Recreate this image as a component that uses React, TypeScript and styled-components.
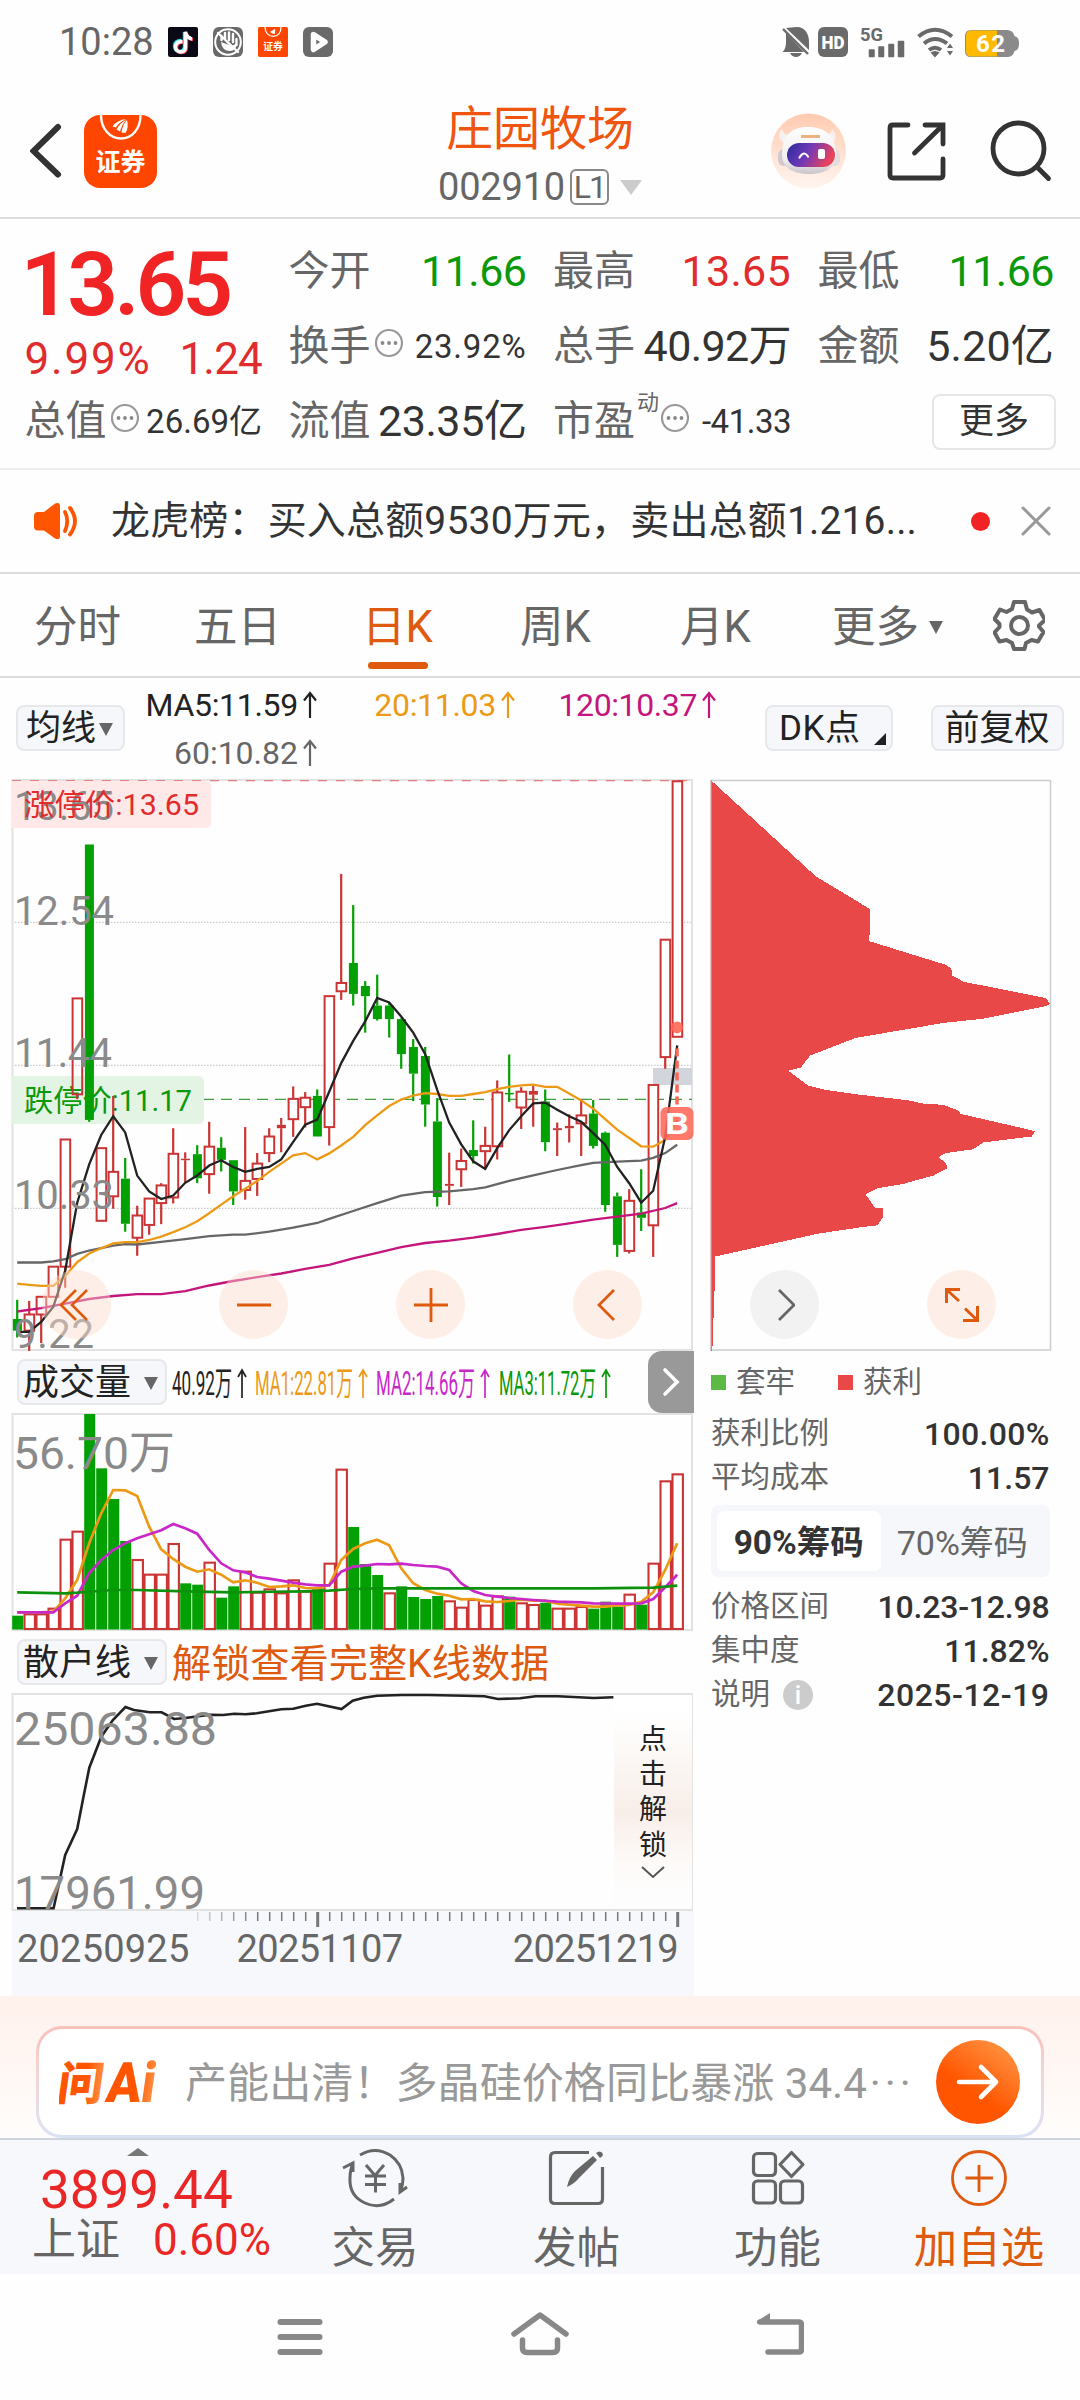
import React from 'react';
import styled, { createGlobalStyle } from 'styled-components';

const GlobalStyle = createGlobalStyle`
  * { box-sizing: border-box; }
  body {
    margin: 0;
    background: #fefefe;
    font-family: Roboto, "Noto Sans CJK SC", sans-serif;
    color: #333;
    line-height: 1;
  }
  svg { display: block; flex: none; }
  svg text { font-family: Roboto, "Noto Sans CJK SC", sans-serif; }
`;

const RED = '#e02c2c';
const UP = '#c93434';
const GREEN = '#0a990a';
const DOWN = '#03a003';
const ORANGE = '#dd5a0f';

const Screen = styled.div`
  width: 1080px;
  height: 2400px;
  display: flex;
  flex-direction: column;
  overflow: hidden;
  background: #fefefe;
  white-space: nowrap;
`;

/* ---------- status bar ---------- */

const StatusBar = styled.div`
  height: 85px;
  padding: 0 60px 0 59px;
  display: flex;
  justify-content: space-between;
`;
const StatusGroup = styled.div<{ $gap: number }>`
  display: flex;
  align-items: center;
  height: 84px;
  gap: ${(p) => p.$gap}px;
`;
const Clock = styled.span`
  font-size: 38px;
  color: #666;
  width: 94px;
`;

/* ---------- header ---------- */

const Header = styled.header`
  height: 134px;
  border-bottom: 2px solid #dcdcdc;
  display: grid;
  grid-template-columns: 300px 1fr 302px;
  padding: 0 28px 0 30px;
`;
const HeaderLeft = styled.div`
  display: flex;
  gap: 22px;
  padding-top: 30px;
`;
const HeaderRight = styled.div`
  display: flex;
  justify-content: flex-end;
  padding-top: 28px;
`;
const TitleBlock = styled.div`
  display: flex;
  flex-direction: column;
  align-items: center;
`;
const Title = styled.h1`
  margin: 19px 0 0;
  font-size: 47px;
  font-weight: 400;
  color: #f05510;
  height: 50px;
  line-height: 50px;
`;
const CodeLine = styled.div`
  display: flex;
  align-items: center;
  height: 36px;
  margin-top: 15px;
  font-size: 38px;
  letter-spacing: -0.2px;
  color: #666;
`;
const LevelTag = styled.span`
  width: 39px;
  height: 36px;
  margin-left: 5px;
  border: 2px solid #888;
  border-radius: 6px;
  font-size: 32px;
  line-height: 33px;
  text-align: center;
  letter-spacing: -2px;
`;
const Triangle = styled.i<{ $w: number; $h: number; $color: string; $ml?: number; $up?: boolean }>`
  width: 0;
  height: 0;
  flex: none;
  margin-left: ${(p) => p.$ml ?? 0}px;
  border-left: ${(p) => p.$w / 2}px solid transparent;
  border-right: ${(p) => p.$w / 2}px solid transparent;
  ${(p) => (p.$up ? 'border-bottom' : 'border-top')}: ${(p) => p.$h}px solid ${(p) => p.$color};
`;

/* ---------- quote ---------- */

const Quote = styled.section`
  height: 251px;
  padding: 15px 26px 0 24.5px;
  border-bottom: 2px solid #eeeeee;
  display: grid;
  grid-template-columns: 237.5px 238px 238px 236.5px;
  grid-template-rows: 75px 75px 75px;
  column-gap: 26.5px;
`;
const Price = styled.div`
  grid-row: span 2;
  display: flex;
  flex-direction: column;
`;
const PriceNow = styled.div`
  height: 101px;
  line-height: 102px;
  font-size: 89px;
  font-weight: 600;
  letter-spacing: -4px;
  color: #f02424;
  margin-left: -4px;
`;
const PriceChange = styled.div`
  height: 49px;
  line-height: 49px;
  display: flex;
  justify-content: space-between;
  font-size: 44px;
  color: ${RED};
`;
const Percent = styled.span<{ $track: number }>`
  letter-spacing: ${(p) => p.$track}px;
`;
const Cell = styled.div`
  display: flex;
  align-items: center;
  min-width: 0;
`;
const Label = styled.span`
  font-size: 41px;
  color: #666;
`;
const Value = styled.span<{ $small?: boolean; $color?: string; $track?: number }>`
  margin-left: auto;
  font-size: ${(p) => (p.$small ? 33 : 43)}px;
  color: ${(p) => p.$color ?? '#333'};
  letter-spacing: ${(p) => p.$track ?? 0}px;
`;
const Sup = styled.sup`
  font-size: 22px;
  color: #666;
  align-self: flex-start;
  margin: 8px 0 0 2px;
  line-height: 1;
`;
const MoreButton = styled.button`
  width: 124px;
  height: 56px;
  margin-left: auto;
  margin-right: -2px;
  padding: 0;
  border: 2px solid #e6e6e6;
  border-radius: 8px;
  background: #fff;
  font: inherit;
  font-size: 35px;
  color: #333;
`;

/* ---------- news ---------- */

const News = styled.section`
  height: 104px;
  padding: 0 29px 0 32px;
  border-bottom: 2px solid #dcdcdc;
  display: flex;
  align-items: center;
`;
const NewsText = styled.p`
  margin: 0 0 0 29px;
  width: 814px;
  font-size: 39px;
  letter-spacing: 0.17px;
`;
const RedDot = styled.i`
  width: 19px;
  height: 19px;
  border-radius: 50%;
  background: #f02424;
  margin: 0 31px 0 46px;
`;

/* ---------- tabs ---------- */

const Tabs = styled.nav`
  height: 104px;
  border-bottom: 2px solid #dcdcdc;
  padding-left: 34px;
  display: flex;
  align-items: stretch;
`;
const Tab = styled.span<{ $w: number; $active?: boolean }>`
  width: ${(p) => p.$w}px;
  display: flex;
  align-items: center;
  position: relative;
  font-size: 43.5px;
  color: ${(p) => (p.$active ? ORANGE : '#666')};
  padding-top: 5px;
  &::after {
    content: '';
    display: ${(p) => (p.$active ? 'block' : 'none')};
    position: absolute;
    left: 6px;
    bottom: 7px;
    width: 60px;
    height: 7px;
    border-radius: 4px;
    background: ${ORANGE};
  }
`;

/* ---------- indicator bar ---------- */

const IndicatorBar = styled.section`
  height: 101px;
  display: flex;
  padding: 0 16px;
  align-items: flex-start;
`;
const Chip = styled.button<{ $w: number }>`
  position: relative;
  flex: none;
  width: ${(p) => p.$w}px;
  height: 46px;
  padding: 2px 8px 0 8px;
  border: 2px solid #e6e8ec;
  border-radius: 8px;
  background: #f6f7fa;
  font: inherit;
  font-size: 35px;
  line-height: 40px;
  color: #222;
  text-align: left;
  display: flex;
  align-items: center;
`;
const ChipSlot = styled.div<{ $ml?: number }>`
  padding-top: 27px;
  margin-left: ${(p) => p.$ml ?? 0}px;
`;
const AverageGrid = styled.div`
  width: 596px;
  margin-left: 20px;
  padding-top: 3px;
  display: grid;
  grid-template-columns: 173px 198px 201px;
  grid-template-rows: 48px 48px;
  align-items: center;
  justify-items: end;
`;
const Average = styled.span<{ $color: string; $track?: number }>`
  display: flex;
  align-items: center;
  gap: 4px;
  font-size: 32px;
  color: ${(p) => p.$color};
  letter-spacing: ${(p) => p.$track ?? -0.3}px;
`;
const Corner = styled.i`
  position: absolute;
  right: 5px;
  bottom: 4px;
  border-left: 12px solid transparent;
  border-bottom: 12px solid #222;
`;

/* ---------- chart area ---------- */

const ChartArea = styled.main`
  height: 1217px;
  display: flex;
`;
const LeftColumn = styled.div`
  width: 694px;
  padding-left: 11px;
`;
const KPanel = styled.div`
  position: relative;
  height: 572px;
`;
const RoundButton = styled.button<{ $cx: number; $gray?: boolean; $nudge?: number }>`
  position: absolute;
  left: ${(p) => p.$cx - 34.5}px;
  bottom: 12px;
  width: 69px;
  height: 69px;
  border: 0;
  padding: 0 ${(p) => p.$nudge ?? 0}px 0 0;
  border-radius: 50%;
  background: ${(p) => (p.$gray ? '#f2f2f2' : 'rgba(253, 221, 204, 0.45)')};
  display: flex;
  align-items: center;
  justify-content: center;
`;
const SubHeader = styled.div`
  height: 62px;
  padding: 8px 0 0 6px;
  display: flex;
  align-items: flex-start;
`;
const SubChip = styled(Chip)`
  padding: 2px 7px 0 4px;
  font-size: 36px;
  justify-content: space-between;
`;
const Legend = styled.div`
  height: 46px;
  display: flex;
  align-items: center;
  margin-left: 5px;
`;
const Narrow = styled.span<{ $w: number; $color: string }>`
  display: flex;
  width: ${(p) => p.$w}px;
  color: ${(p) => p.$color};
`;
const LegendSvg = styled.svg`
  overflow: visible;
`;
const NextButton = styled.button`
  width: 46px;
  height: 62px;
  margin: -8px 0 0 auto;
  border: 0;
  padding: 0;
  border-radius: 14px 0 0 14px;
  background: #999;
  display: flex;
  align-items: center;
  justify-content: center;
`;
const UnlockTitle = styled.span`
  margin-left: 5px;
  font-size: 39.2px;
  line-height: 50px;
  color: ${ORANGE};
`;
const RetailPanel = styled.div`
  position: relative;
  height: 218px;
`;
const Unlock = styled.div`
  position: absolute;
  right: 2px;
  top: 2px;
  width: 78px;
  height: 214px;
  display: flex;
  flex-direction: column;
  align-items: center;
  padding-top: 27px;
  font-size: 28px;
  line-height: 35.2px;
  color: #222;
  background: linear-gradient(#fff 8%, #fdfbf9 20%, #f8eee9 55%, #fdfaf8 78%, #fdfdfd 92%);
`;
const Axis = styled.div`
  height: 85px;
  margin-left: 1px;
  background: #f7f8fb;
`;
const Dates = styled.div`
  display: flex;
  font-size: 38px;
  color: #666;
  padding: 1px 16px 0 5px;
`;
const DateText = styled.span<{ $ml: string; $track: number }>`
  margin-left: ${(p) => p.$ml};
  letter-spacing: ${(p) => p.$track}px;
`;

const RightColumn = styled.div`
  width: 342px;
  margin-left: 16px;
`;
const ChipLegend = styled.div`
  display: flex;
  align-items: center;
  height: 61px;
  padding: 2px 0 0 1px;
  font-size: 29.5px;
  color: #666;
`;
const Square = styled.i<{ $color: string; $ml?: number }>`
  width: 15px;
  height: 15px;
  margin: 0 10px 0 ${(p) => p.$ml ?? 0}px;
  background: ${(p) => p.$color};
`;
const StatRow = styled.div`
  height: 44px;
  display: flex;
  align-items: center;
  padding: 0 2.5px 0 1px;
  font-size: 29.5px;
  color: #666;
`;
const Strong = styled.b<{ $track?: number }>`
  margin-left: auto;
  font-size: 32px;
  font-weight: 500;
  letter-spacing: ${(p) => p.$track ?? 0}px;
  color: #333;
`;
const Segment = styled.div`
  width: 339px;
  height: 72px;
  margin: 5px 0 8px 1px;
  padding: 6px;
  border-radius: 7px;
  background: #f6f7fa;
  display: flex;
`;
const SegmentItem = styled.span<{ $active?: boolean }>`
  flex: 1;
  padding-top: 2px;
  border-radius: 7px;
  background: ${(p) => (p.$active ? '#fff' : 'transparent')};
  color: ${(p) => (p.$active ? '#333' : '#666')};
  font-weight: ${(p) => (p.$active ? 700 : 400)};
  font-size: ${(p) => (p.$active ? 33.5 : 34)}px;
  line-height: 60px;
  text-align: center;
`;
const Info = styled.i`
  width: 30px;
  height: 30px;
  margin-left: 13px;
  border-radius: 50%;
  background: #ccc;
  color: #fff;
  font-size: 25px;
  font-weight: 500;
  font-style: normal;
  line-height: 31px;
  text-align: center;
`;

/* ---------- ask bar ---------- */

const AskBar = styled.section`
  height: 142px;
  padding: 30px 36px 0;
  background: linear-gradient(#fff1ec, #fff8f5 60%, #fffdfc);
`;
const AskBox = styled.div`
  height: 112px;
  border: 3px solid transparent;
  border-radius: 26px;
  background: linear-gradient(#fff, #fff) padding-box,
    linear-gradient(#f8c2ba, #f3d5d6 45%, #d9e2f6) border-box;
  display: flex;
  align-items: center;
  padding: 0 21px 0 20px;
`;
const AskText = styled.span`
  margin-left: 28px;
  padding-top: 4px;
  width: 728px;
  font-size: 42.1px;
  color: #999;
`;
const AskDots = styled.span`
  letter-spacing: 4px;
  margin-left: 3px;
`;
const AskButton = styled.button`
  width: 84px;
  height: 84px;
  margin-left: auto;
  border: 0;
  padding: 0;
  border-radius: 50%;
  background: linear-gradient(215deg, #ff9240 10%, #ff5500 60%);
  display: flex;
  align-items: center;
  justify-content: center;
`;

/* ---------- bottom bars ---------- */

const BottomNav = styled.nav`
  height: 136px;
  border-top: 2px solid #cfd5de;
  background: #f7f8fb;
  display: grid;
  grid-template-columns: 274px 202px 201px 201px 202px;
`;
const IndexBlock = styled.div`
  padding: 8px 0 0 32px;
  color: #ea2727;
`;
const IndexValue = styled.div`
  margin: 7px 0 0 8px;
  font-size: 53px;
  line-height: 54px;
`;
const IndexLine = styled.div`
  display: flex;
  align-items: center;
  font-size: 44px;
  height: 44px;
  margin-top: 1px;
`;
const IndexName = styled.span`
  color: #666;
`;
const IndexPct = styled.span`
  margin-left: 33px;
  font-size: 44px;
`;
const NavItem = styled.div<{ $color?: string }>`
  display: flex;
  flex-direction: column;
  align-items: center;
  padding-top: 7px;
  color: ${(p) => p.$color ?? '#666'};
`;
const NavText = styled.span`
  height: 50px;
  line-height: 50px;
  margin-top: 15px;
  font-size: 43.5px;
`;
const SystemBar = styled.div`
  flex: 1;
  padding: 36px 276px 0 270px;
  display: grid;
  grid-template-columns: 236px 1fr auto;
  align-items: start;
`;

/* ---------- data ---------- */

type Candle = [up: 0 | 1, top: number, bottom: number, high: number, low: number];

const candles: Candle[] = [
  [0, 1459, 1490, 1408, 1508], [1, 1447, 1490, 1411, 1545], [1, 1400, 1447, 1400, 1523], [1, 1320, 1400, 1320, 1400],
  [1, 982, 1320, 982, 1376], [1, 607, 862, 607, 875], [0, 198, 930, 198, 935], [1, 1005, 1198, 1005, 1198],
  [1, 1068, 1133, 866, 1166], [0, 1086, 1206, 1031, 1227], [1, 1184, 1243, 1158, 1291], [1, 1139, 1209, 1139, 1235],
  [1, 1104, 1151, 1098, 1207], [1, 1020, 1136, 952, 1152], [1, 1033, 1037, 1016, 1096], [0, 1021, 1085, 997, 1098],
  [1, 1001, 1074, 935, 1126], [0, 1004, 1036, 976, 1067], [0, 1037, 1120, 1037, 1156], [1, 1092, 1116, 949, 1142],
  [1, 1046, 1087, 1018, 1132], [1, 974, 1018, 952, 1042], [1, 943, 952, 925, 1016], [1, 874, 928, 841, 975],
  [1, 871, 896, 856, 950], [0, 866, 974, 849, 974], [1, 601, 949, 601, 998], [1, 566, 588, 276, 611],
  [0, 513, 595, 359, 626], [0, 574, 601, 561, 698], [0, 626, 662, 544, 666], [0, 626, 662, 618, 711],
  [0, 662, 755, 660, 794], [0, 736, 807, 715, 880], [0, 760, 889, 736, 948], [0, 934, 1135, 872, 1160],
  [1, 1100, 1105, 1017, 1156], [1, 1039, 1061, 1006, 1108], [0, 1010, 1026, 931, 1046], [1, 999, 1013, 948, 1062],
  [1, 857, 1000, 825, 1035], [0, 858, 861, 756, 882], [1, 855, 897, 843, 954], [1, 853, 863, 840, 948],
  [0, 881, 989, 849, 1013], [1, 952, 957, 937, 1026], [1, 946, 952, 915, 990], [1, 918, 939, 874, 1026],
  [0, 913, 999, 877, 1006], [0, 964, 1156, 961, 1174], [0, 1133, 1262, 1123, 1294], [1, 1145, 1278, 1114, 1285],
  [0, 1176, 1190, 1061, 1225], [1, 837, 1210, 837, 1294], [1, 451, 763, 451, 794], [1, 30, 709, 30, 709],
];

const ma5 = [1493, 1493, 1467, 1427, 1330, 1150, 1048, 970, 920, 963, 1078, 1120, 1140, 1131, 1097, 1078, 1051, 1037,
  1055, 1068, 1060, 1055, 1035, 988, 943, 929, 855, 779, 720, 668, 606, 618, 655, 698, 755, 850, 937, 995, 1040, 1060,
  1005, 957, 920, 886, 884, 903, 920, 935, 965, 996, 1055, 1098, 1150, 1118, 975, 732];
const ma20 = [1365, 1368, 1371, 1371, 1345, 1308, 1285, 1271, 1258, 1255, 1255, 1249, 1240, 1228, 1215, 1199, 1178,
  1155, 1133, 1113, 1092, 1068, 1046, 1024, 1018, 1035, 1019, 998, 975, 944, 918, 893, 876, 865, 859, 861, 866, 866,
  861, 856, 848, 842, 838, 836, 842, 842, 860, 878, 900, 928, 956, 978, 1000, 1001, 983, 930];

type Pair = [number, number];
const ma60: Pair[] = [[0, 1309], [2, 1309], [3, 1306], [4, 1300], [5, 1286], [6, 1277], [8, 1264], [9, 1260],
  [10, 1261], [12, 1254], [14, 1247], [16, 1239], [18, 1235], [19, 1235], [21, 1227], [23, 1216], [25, 1204],
  [26, 1193], [28, 1172], [30, 1151], [32, 1131], [34, 1122], [36, 1120], [38, 1114], [39, 1109], [41, 1092],
  [43, 1077], [45, 1063], [47, 1050], [48, 1044], [50, 1041], [52, 1038], [53, 1031], [54, 1018], [55, 996]];
const ma120: Pair[] = [[0, 1439], [2, 1430], [4, 1418], [6, 1406], [8, 1398], [10, 1393], [12, 1393], [14, 1385],
  [16, 1370], [18, 1358], [20, 1348], [22, 1338], [24, 1326], [26, 1315], [28, 1298], [30, 1283], [32, 1268],
  [34, 1257], [36, 1251], [38, 1243], [40, 1233], [42, 1222], [44, 1214], [46, 1205], [48, 1195], [50, 1187],
  [52, 1179], [54, 1164], [55, 1151]];

const volumes = [797, 790, 790, 773, 566, 542, 192, 355, 447, 573, 627, 671, 671, 579, 700, 704, 635, 743, 709, 662,
  725, 715, 727, 688, 722, 715, 638, 356, 531, 642, 675, 727, 709, 741, 747, 738, 751, 770, 747, 764, 736, 740, 757,
  762, 758, 773, 773, 768, 776, 755, 770, 731, 764, 638, 391, 370];
const volumeUp = [0, 1, 1, 1, 1, 1, 0, 0, 0, 0, 1, 1, 1, 1, 0, 0, 1, 0, 0, 1, 1, 1, 1, 1, 1, 0, 1, 1, 0, 0, 0, 1, 0,
  0, 0, 0, 1, 1, 1, 1, 1, 0, 1, 1, 0, 1, 1, 1, 0, 0, 0, 1, 0, 1, 1, 1];
const vma1 = [788, 787, 787, 785, 745, 690, 580, 490, 420, 421, 438, 530, 598, 627, 650, 665, 658, 674, 697, 691, 698,
  711, 709, 706, 714, 715, 705, 630, 597, 580, 569, 586, 655, 700, 720, 731, 737, 748, 747, 754, 756, 753, 749, 752,
  752, 761, 764, 767, 770, 770, 766, 765, 755, 727, 660, 580];
const vma2: Pair[] = [[0, 787], [3, 787], [4, 760], [5, 737], [6, 670], [7, 630], [8, 600], [9, 580], [10, 565],
  [11, 553], [12, 541], [13, 522], [14, 535], [15, 551], [16, 600], [17, 640], [18, 661], [19, 667], [20, 681],
  [21, 686], [22, 692], [23, 698], [24, 703], [25, 706], [26, 706], [27, 665], [28, 650], [29, 647], [30, 642],
  [31, 643], [32, 641], [33, 645], [34, 648], [35, 650], [36, 660], [37, 700], [38, 723], [39, 735], [40, 740],
  [41, 744], [43, 750], [45, 755], [47, 757], [48, 760], [51, 761], [52, 760], [53, 747], [54, 712], [55, 674]];
const vma3: Pair[] = [[0, 727], [4, 730], [5, 728], [6, 725], [8, 720], [10, 720], [14, 724], [18, 727], [24, 724],
  [26, 722], [28, 717], [30, 715], [36, 715], [48, 715], [53, 713], [55, 707]];

const retail: Pair[] = [[38, 835], [120, 835], [146, 675], [173, 597], [187, 500], [200, 413], [227, 320], [253, 270],
  [281, 231], [300, 240], [335, 247], [362, 247], [390, 267], [415, 264], [470, 254], [500, 255], [525, 251],
  [550, 253], [575, 250], [630, 238], [657, 236], [685, 227], [710, 221], [765, 237], [790, 212], [815, 203],
  [845, 197], [900, 195], [960, 195], [1040, 197], [1085, 199], [1115, 207], [1165, 205], [1200, 199], [1250, 199],
  [1330, 204], [1374, 202]];

const chipShape: Pair[] = [[64, 28], [378, 283], [541, 370], [538, 455], [765, 517], [784, 527], [786, 546], [822, 563],
  [1068, 606], [1080, 621], [1066, 628], [880, 661], [762, 672], [497, 712], [360, 759], [332, 791], [294, 799],
  [355, 839], [400, 849], [500, 862], [656, 878], [695, 886], [760, 890], [805, 905], [812, 914], [950, 942],
  [1036, 960], [1025, 974], [880, 990], [850, 1008], [768, 1018], [745, 1029], [768, 1045], [772, 1058], [730, 1078],
  [635, 1101], [560, 1112], [527, 1128], [555, 1163], [578, 1165], [580, 1186], [562, 1210], [515, 1215],
  [385, 1232], [75, 1293], [75, 1350], [67, 1543], [64, 1543]];

const slotX = (i: number) => 17.2 + i * 12;
const priceY = (v: number) => 770 + v / 2.6576;
const volumeY = (v: number) => 1350 + v / 3;
const toPairs = (a: number[]): Pair[] => a.map((v, i) => [i, v]);
const points = (a: Pair[], fy: (v: number) => number) =>
  a.map(([i, v]) => `${slotX(i).toFixed(1)},${fy(v).toFixed(1)}`).join(' ');

/* ---------- small drawings ---------- */

const BrandMark = ({ size, r }: { size: number; r: number }) => (
  <svg width={size} height={size} viewBox="0 0 73 73">
    <rect width="73" height="73" rx={r} fill="#ff4600" />
    <path d="M17 0C17 14 26 23.500 37 23.500S56.500 14 56.500 0" fill="none" stroke="#fff" strokeWidth="2.400" />
    <path d="M28.500 11.500Q33 5 42 4Q34 8 32 12.500ZM32.500 14.500Q36 8 42.500 4.500Q37.500 10 36 16.500ZM37.500 17.500Q38.500 10 43 5Q45 12 41.500 18Z" fill="#fff" />
    <text x="36.500" y="56" fontSize="25" fontWeight="700" fill="#fff" textAnchor="middle">证券</text>
  </svg>
);

const Dots = ({ ml }: { ml: number }) => (
  <svg width={28 + ml} height="40" viewBox={`${-ml} 0 ${28 + ml} 40`}>
    <circle cx="14" cy="16" r="13" fill="none" stroke="#999" strokeWidth="2.200" />
    <g fill="#888"><circle cx="7.500" cy="16" r="1.900" /><circle cx="14" cy="16" r="1.900" /><circle cx="20.500" cy="16" r="1.900" /></g>
  </svg>
);

const UpArrow = () => (
  <svg width="16" height="28" viewBox="0 0 16 28" fill="none" stroke="currentColor" strokeWidth="2.200">
    <path d="M8 27V2M2 9.500L8 2L14 9.500" />
  </svg>
);

const Robot = () => (
  <svg width="75" height="76" viewBox="0 0 75 76">
    <defs>
      <linearGradient id="halo" x1="0" y1="0" x2="0" y2="1"><stop offset="0" stopColor="#ffcbb0" /><stop offset="1" stopColor="#fff5f0" /></linearGradient>
      <linearGradient id="visor" x1="0" y1="0" x2="1" y2="0.300"><stop offset="0" stopColor="#2b2b9c" /><stop offset="0.500" stopColor="#7038b8" /><stop offset="1" stopColor="#e8425c" /></linearGradient>
      <linearGradient id="shell" x1="0" y1="0" x2="0" y2="1"><stop offset="0" stopColor="#ffffff" /><stop offset="0.700" stopColor="#f0edef" /><stop offset="1" stopColor="#c9c4ca" /></linearGradient>
    </defs>
    <circle cx="37.500" cy="38" r="37.500" fill="url(#halo)" />
    <path d="M11 16C6 21 7 28 15 31L20 22C15 22 12 20 11 16ZM61 16C66 21 66 28 59 31L53 22C58 22 60 20 61 16Z" fill="#f6f0ef" />
    <rect x="7" y="36" width="12" height="17" rx="6" fill="#d0cacf" /><rect x="57" y="36" width="12" height="17" rx="6" fill="#e2dcde" />
    <path d="M37 14C55 14 65 24 65 41C65 55 54 61 38 61C22 61 11 55 11 41C11 24 19 14 37 14Z" fill="url(#shell)" />
    <rect x="16" y="30" width="48" height="24" rx="12" fill="url(#visor)" />
    <path d="M28.500 44.500Q33 37 37 43.500" fill="none" stroke="#fff" strokeWidth="2.200" strokeLinecap="round" />
    <rect x="47" y="36" width="7" height="10" rx="2" fill="#fff" />
    <path d="M30 23.500H49" stroke="#eab27e" strokeWidth="3" />
  </svg>
);

const StatusIcons = () => (
  <svg width="238" height="40" viewBox="783 22 238 40">
    <g fill="#6a6a6a">
      <path d="M787 28L810 50V42C810 34 806 27 798 27C794 27 790 28 787 28ZM787 33L805 52H783.500C786 50 787 46 787 42ZM791 53H803Q801 57 797 57Q793 57 791 53Z" />
      <path d="M784 29L809 54" stroke="#6a6a6a" strokeWidth="2.400" />
      <rect x="819" y="27" width="30" height="30" rx="6" />
      <path d="M870.500 50h4.500v6.500h-4.500zM880 47h4.500v9.500h-4.500zM890 44.500h4.500v12h-4.500zM899.500 41.500h5v15h-5z" stroke="#6a6a6a" strokeWidth="1.500" strokeLinejoin="round" />
    </g>
    <text x="834" y="49" fontSize="19" fontWeight="900" fill="#fff" textAnchor="middle" textLength="23" lengthAdjust="spacingAndGlyphs">HD</text>
    <text x="861" y="41" fontSize="19" fontWeight="700" fill="#6a6a6a" textLength="23" lengthAdjust="spacingAndGlyphs">5G</text>
    <g fill="none" stroke="#6a6a6a" strokeWidth="4">
      <path d="M919.500 36.500Q936 23 953 36.500M925 43.500Q936 34.500 948 43.500M930 50Q936 45.500 942 50" />
    </g>
    <path d="M931.500 52.500Q936 49.500 940.500 52.500L936 57.500ZM948 48l3-4.500 3 4.500zM948 51h6l-3 4.500z" fill="#6a6a6a" />
    <path d="M972 30H1008Q1014 30 1015.500 36Q1020 37 1020 43.500Q1020 50 1015.500 51Q1014 57 1008 57H972Q966 57 966 51V36Q966 30 972 30Z" fill="#8a8a8a" />
    <path d="M998 30.500H972Q967 30.500 967 36V51Q967 56.500 972 56.500H998Z" fill="#ffb900" />
    <text x="991.500" y="52" fontSize="24" fontWeight="700" fill="#fff" textAnchor="middle" textLength="29">62</text>
  </svg>
);

const AppIcons = () => (
  <svg width="165" height="32" viewBox="168 26 165 32">
    <rect x="168" y="27" width="30" height="30" rx="2" fill="#0a0a16" />
    <g fill="none" strokeWidth="3.400">
      <path d="M181.500 40.500Q174.500 40.500 174.500 46.500Q175 51 179.500 51.500Q184.500 51.500 184.500 46V32Q186 38 191 38" stroke="#2ce6e6" />
      <path d="M183.500 42Q176.500 42 176.500 48Q177 52.500 181.500 52.500Q186.500 52.500 186.500 47V34Q188 39 193 39.500" stroke="#fb3a5c" />
      <path d="M182.500 41.500Q175.500 41.500 175.500 47Q176 51.500 180.500 52Q185.500 52 185.500 46.500V32Q187 38 192 39" stroke="#fff" />
    </g>
    <rect x="213" y="27" width="30" height="30" rx="6" fill="#6a6a6a" />
    <circle cx="228" cy="42" r="12.800" fill="none" stroke="#fff" strokeWidth="2" />
    <path d="M221.500 40V36M225 39V33M229 40V32.500M233 42V34M236.500 45V39M218 33L238 52" stroke="#fff" strokeWidth="2.400" strokeLinecap="round" />
    <path d="M221 42Q222 51 230 51Q236 51 237 43L232 46Z" fill="#fff" />
    <rect x="303" y="27" width="30" height="30" rx="6" fill="#6a6a6a" />
    <path d="M313.500 34.500L325 42L313.500 49.500Z" fill="none" stroke="#fff" strokeWidth="5.500" strokeLinejoin="round" />
    <svg x="258" y="27" width="30" height="30" viewBox="0 0 73 73">
      <rect width="73" height="73" rx="4" fill="#ff4600" />
      <path d="M17 0C17 14 26 23 37 23S56 14 56 0" fill="none" stroke="#fff" strokeWidth="3" />
      <path d="M29 12L42 4L41 17L35 16Z" fill="#fff" />
      <text x="36.500" y="55" fontSize="24" fontWeight="700" fill="#fff" textAnchor="middle">证券</text>
    </svg>
  </svg>
);

const scaleLabels: [string, number, number][] = [
  ['13.65', 132, 97], ['12.54', 411, 97], ['11.44', 789, 95], ['10.33', 1167, 97], ['9.22', 1537, 77],
];

const KChart = () => (
  <svg width="683" height="572" viewBox="11 779 683 572">
    <g stroke="#c9c9c9" strokeWidth="1.200" strokeDasharray="1.500 1.500">
      {[405, 785, 1165].map((v) => <line key={v} x1="12" x2="692" y1={priceY(v)} y2={priceY(v)} />)}
    </g>
    <path d="M12.500 780H692V1350H12.500Z" fill="none" stroke="#e2e2e2" strokeWidth="2" />
    <path d="M12 780.700H690" stroke="#e08080" strokeWidth="1.300" strokeDasharray="9 9" />
    <path d="M203 1099.300H692" stroke="#3f9f3f" strokeWidth="1.300" strokeDasharray="11 7" />
    <path d="M12 1076H198Q204 1076 204 1082V1118Q204 1124 198 1124H12Z" fill="#e3f4e4" />
    <text x="24" y="1110.500" fontSize="30" fill={GREEN} textLength="168" lengthAdjust="spacingAndGlyphs">跌停价:11.17</text>
    <path d="M12 781H205Q211 781 211 787V822Q211 828 205 828H12Z" fill="#ffe8e8" />
    <rect x="653" y={priceY(792)} width="39" height="17" fill="#d2d6dc" />
    {candles.map(([up, top, bottom, high, low], i) => {
      const x = slotX(i);
      const color = up ? UP : DOWN;
      const h = (bottom - top) / 2.6576;
      return (
        <g key={i} stroke={color}>
          {high < top && <line x1={x} x2={x} y1={priceY(high)} y2={priceY(top)} strokeWidth="2.200" />}
          {low > bottom && <line x1={x} x2={x} y1={priceY(bottom)} y2={priceY(low)} strokeWidth="2.200" />}
          {up && h > 4
            ? <rect x={x - 4.600} y={priceY(top)} width="9.600" height={h} fill={i === 5 ? 'none' : '#fff'} strokeWidth="2" />
            : <rect x={x - 4.300} y={priceY(top)} width="9" height={Math.max(h, 1.500)} fill={color} stroke="none" />}
        </g>
      );
    })}
    <g fill="none" strokeWidth="2.300">
      <polyline points={points(ma120, priceY)} stroke="#c4157c" />
      <polyline points={points(ma60, priceY)} stroke="#666" />
      <polyline points={points(toPairs(ma20), priceY)} stroke="#ec9a16" />
      <polyline points={points(toPairs(ma5), priceY)} stroke="#222" />
    </g>
    <circle cx="677" cy={priceY(684)} r="6" fill="#ff6655" fillOpacity="0.900" />
    <path d={`M677 ${priceY(740)}V1106`} stroke="#ff6655" strokeWidth="3.500" strokeDasharray="8 4" />
    <rect x="660.500" y="1107" width="33" height="33" rx="6" fill="#ff6858" fillOpacity="0.880" />
    <text x="677" y="1133.500" fontSize="29" fontWeight="700" fill="#fff" textAnchor="middle" textLength="24" lengthAdjust="spacingAndGlyphs">B</text>
    {scaleLabels.map(([t, y, w]) => (
      <text key={t} x="14" y={priceY(y)} fontSize="40" fill="#8a8a8a" textLength={w + 3}>{t}</text>
    ))}
    <text x="24" y="815" fontSize="30" fill={RED} textLength="175" lengthAdjust="spacingAndGlyphs">涨停价:13.65</text>
  </svg>
);

const VolumeChart = () => (
  <svg width="683" height="218" viewBox="11 1413 683 218">
    <path d="M12.500 1414H692V1630H12.500Z" fill="none" stroke="#e2e2e2" strokeWidth="2" />
    {volumes.map((v, i) => {
      const x = slotX(i);
      const y = volumeY(v);
      return volumeUp[i]
        ? <rect key={i} x={x - 4.700} y={y + 1} width="10.400" height={1628 - y} fill="#fff" stroke={UP} strokeWidth="2.100" />
        : <rect key={i} x={x - 5} y={y} width="11" height={1629.500 - y} fill={DOWN} />;
    })}
    <g fill="none" strokeWidth="2.700">
      <polyline points={points(toPairs(vma1), volumeY)} stroke="#ec9a16" />
      <polyline points={points(vma2, volumeY)} stroke="#c928c9" />
      <polyline points={points(vma3, volumeY)} stroke="#0c910c" />
    </g>
    <text x="13" y="1469" fontSize="45" fill="#8a8a8a" textLength="162" lengthAdjust="spacingAndGlyphs">56.70万</text>
  </svg>
);

const RetailChart = () => (
  <svg width="683" height="218" viewBox="11 1693 683 218">
    <path d="M12.500 1694H692V1910H12.500Z" fill="none" stroke="#e2e2e2" strokeWidth="2" />
    <polyline
      points={retail.map(([x, y]) => `${(x / 2.24).toFixed(1)},${(1630 + y / 3).toFixed(1)}`).join(' ')}
      fill="none" stroke="#222" strokeWidth="2.600"
    />
    <text x="14" y="1745" fontSize="45.500" fill="#8a8a8a" textLength="203" lengthAdjust="spacingAndGlyphs">25063.88</text>
    <text x="14" y="1909" fontSize="45.500" fill="#8a8a8a" textLength="191" lengthAdjust="spacingAndGlyphs">17961.99</text>
  </svg>
);

const Ticks = () => (
  <svg width="681" height="18" viewBox="12 1911 681 18">
    {Array.from({ length: 41 }, (_, k) => {
      const x = 197.700 + k * 12;
      const major = k === 10 || k === 40;
      return (
        <line key={k} x1={x} x2={x} y1="1912" y2={major ? 1927 : 1921} stroke="#777"
          strokeWidth={major ? 3 : 1.500} opacity={Math.min(1, 0.25 + k * 0.15)} />
      );
    })}
  </svg>
);

const ChipChart = () => (
  <svg width="342" height="572" viewBox="710 779 342 572">
    <path d="M711 780.500H1050.500V1350H711Z" fill="none" stroke="#ccc" strokeWidth="1.500" />
    <polygon points={chipShape.map(([x, y]) => `${690 + x / 3},${priceY(y)}`).join(' ')} fill="#e94848" shapeRendering="crispEdges" />
    <path d="M711.300 780V1350" stroke="#e08a8a" strokeWidth="1" />
  </svg>
);

const volumeLegend: [string, string, number, number][] = [
  ['40.92万', '#222', 60, 83], ['MA1:22.81万', '#ec9a16', 98, 121], ['MA2:14.66万', '#c928c9', 99, 123], ['MA3:11.72万', GREEN, 97, 112],
];

export default function App() {
  return (
    <Screen>
      <GlobalStyle />
      <StatusBar>
        <StatusGroup $gap={15}>
          <Clock>10:28</Clock>
          <AppIcons />
        </StatusGroup>
        <StatusGroup $gap={0}><StatusIcons /></StatusGroup>
      </StatusBar>

      <Header>
        <HeaderLeft>
          <svg width="32" height="73" viewBox="30 115 32 73" fill="none" stroke="#333" strokeWidth="6" strokeLinecap="round">
            <path d="M58 127L33.500 151L58 174.500" />
          </svg>
          <BrandMark size={73} r={16} />
        </HeaderLeft>
        <TitleBlock>
          <Title>庄园牧场</Title>
          <CodeLine>
            002910<LevelTag>L1</LevelTag>
            <Triangle $w={22} $h={15} $color="#ccc" $ml={11} />
          </CodeLine>
        </TitleBlock>
        <HeaderRight>
          <Robot />
          <svg width="206" height="76" viewBox="846 113 206 76" fill="none" stroke="#333" strokeWidth="4.800" strokeLinecap="round">
            <path d="M908 125H893Q890 125 890 128V175Q890 178 893 178H940Q943 178 943 175V159M925 125H943V144M942 126L914.500 153" />
            <circle cx="1018.500" cy="148.500" r="25.500" />
            <path d="M1037 167L1048.500 178.500" />
          </svg>
        </HeaderRight>
      </Header>

      <Quote>
        <Price>
          <PriceNow>13.65</PriceNow>
          <PriceChange><Percent $track={1.8}>9.99%</Percent><Percent $track={-0.8}>1.24</Percent></PriceChange>
        </Price>
        <Cell><Label>今开</Label><Value $color={GREEN} $track={-0.5}>11.66</Value></Cell>
        <Cell><Label>最高</Label><Value $color={RED} $track={0.3}>13.65</Value></Cell>
        <Cell><Label>最低</Label><Value $color={GREEN} $track={-0.5}>11.66</Value></Cell>
        <Cell><Label>换手</Label><Dots ml={4} /><Value $small $track={0.8}>23.92%</Value></Cell>
        <Cell><Label>总手</Label><Value $track={-0.6}>40.92万</Value></Cell>
        <Cell><Label>金额</Label><Value $track={0.2}>5.20亿</Value></Cell>
        <Cell><Label>总值</Label><Dots ml={4} /><Value $small>26.69亿</Value></Cell>
        <Cell><Label>流值</Label><Value $track={-0.4}>23.35亿</Value></Cell>
        <Cell><Label>市盈</Label><Sup>动</Sup><Dots ml={2} /><Value $small $track={-0.5}>-41.33</Value></Cell>
        <Cell><MoreButton>更多</MoreButton></Cell>
      </Quote>

      <News>
        <svg width="50" height="40" viewBox="32 500 50 40">
          <path d="M34 515Q34 511 38 511H44L55 502.500Q60 500.500 60 505V535Q60 539.500 55 537.500L44 529.500H38Q34 529.500 34 525.500Z" fill="#ff5500" />
          <path d="M65 511Q69.500 520 65 530M70 507Q80 520 70 533.500" fill="none" stroke="#ff5500" strokeWidth="3.800" strokeLinecap="round" />
        </svg>
        <NewsText>龙虎榜：买入总额9530万元，卖出总额1.216...</NewsText>
        <RedDot />
        <svg width="30" height="30" viewBox="0 0 30 30" stroke="#999" strokeWidth="3" strokeLinecap="round"><path d="M2 2L28 28M28 2L2 28" /></svg>
      </News>

      <Tabs>
        <Tab $w={160}>分时</Tab>
        <Tab $w={168}>五日</Tab>
        <Tab $w={158} $active>日K</Tab>
        <Tab $w={160}>周K</Tab>
        <Tab $w={152}>月K</Tab>
        <Tab $w={161}>更多<Triangle $w={15} $h={13} $color="#666" $ml={10} /></Tab>
        <svg width="52" height="104" viewBox="992 574 52 104" fill="none" stroke="#666" strokeWidth="4" strokeLinejoin="round">
          <path d="M1013 602H1024L1026 609.500L1031 612.500L1038.500 610L1044 620L1038 625.500V626.500L1042.500 632L1037 641.500L1030.500 640L1025 643L1023.500 649H1013L1011 643L1005.500 640L998.500 641.500L993.500 632.500L998.500 627V624L993.500 619L999 609.500L1005.500 612L1011 609Z" />
          <circle cx="1018.500" cy="625.500" r="8.500" />
        </svg>
      </Tabs>

      <IndicatorBar>
        <ChipSlot><Chip $w={109}>均线<Triangle $w={15} $h={13} $color="#666" $ml={3} /></Chip></ChipSlot>
        <AverageGrid>
          <Average $color="#222" $track={-0.3}>MA5:11.59<UpArrow /></Average>
          <Average $color="#ec9a16">20:11.03<UpArrow /></Average>
          <Average $color="#c4157c" $track={-0.4}>120:10.37<UpArrow /></Average>
          <Average $color="#666" $track={0}>60:10.82<UpArrow /></Average>
        </AverageGrid>
        <ChipSlot $ml={24}><Chip $w={128}><Percent $track={0.5}>&#8202;DK点</Percent><Corner /></Chip></ChipSlot>
        <ChipSlot $ml={38}><Chip $w={133}>&#8202;前复权</Chip></ChipSlot>
      </IndicatorBar>

      <ChartArea>
        <LeftColumn>
          <KPanel>
            <KChart />
            <RoundButton $cx={65.500} $nudge={5}>
              <svg width="30" height="34" viewBox="0 0 30 34" fill="none" stroke={ORANGE} strokeWidth="2.600"><path d="M17 2L2 17L17 32M28 2L13 17L28 32" /></svg>
            </RoundButton>
            <RoundButton $cx={242.500}>
              <svg width="34" height="34" stroke={ORANGE} strokeWidth="2.800"><path d="M0 17H34" /></svg>
            </RoundButton>
            <RoundButton $cx={419.500}>
              <svg width="34" height="34" stroke={ORANGE} strokeWidth="2.800"><path d="M0 17H34M17 0V34" /></svg>
            </RoundButton>
            <RoundButton $cx={596.500} $nudge={3}>
              <svg width="20" height="34" viewBox="0 0 20 34" fill="none" stroke={ORANGE} strokeWidth="2.800"><path d="M18 2L3 17L18 32" /></svg>
            </RoundButton>
          </KPanel>

          <SubHeader>
            <SubChip $w={150}>成交量<Triangle $w={15} $h={13} $color="#666" /></SubChip>
            <Legend>
              {volumeLegend.map(([text, color, w, slot]) => (
                <Narrow key={text} $w={slot} $color={color}>
                  <LegendSvg width={w + 16} height="34" viewBox={`0 0 ${w + 16} 34`}>
                    <text x="0" y="30" fontSize="33" fill="currentColor" textLength={w} lengthAdjust="spacingAndGlyphs">{text}</text>
                    <path d={`M${w + 10} 33V5M${w + 6} 12L${w + 10} 5L${w + 14} 12`} fill="none" stroke="currentColor" strokeWidth="1.700" />
                  </LegendSvg>
                </Narrow>
              ))}
            </Legend>
            <NextButton>
              <svg width="18" height="30" viewBox="0 0 18 30" fill="none" stroke="#fff" strokeWidth="3.600" strokeLinecap="round"><path d="M3 3L15 15L3 27" /></svg>
            </NextButton>
          </SubHeader>
          <VolumeChart />

          <SubHeader>
            <SubChip $w={150}>散户线<Triangle $w={15} $h={13} $color="#666" /></SubChip>
            <UnlockTitle>解锁查看完整K线数据</UnlockTitle>
          </SubHeader>
          <RetailPanel>
            <RetailChart />
            <Unlock>
              <span>点</span><span>击</span><span>解</span><span>锁</span>
              <svg width="24" height="22" viewBox="0 0 24 22" fill="none" stroke="#555" strokeWidth="2"><path d="M1 4L12 14L23 4" /></svg>
            </Unlock>
          </RetailPanel>
          <Axis>
            <Ticks />
            <Dates>
              <DateText $ml="0" $track={0.2}>20250925</DateText>
              <DateText $ml="47px" $track={-0.6}>20251107</DateText>
              <DateText $ml="auto" $track={-0.7}>20251219</DateText>
            </Dates>
          </Axis>
        </LeftColumn>

        <RightColumn>
          <KPanel>
            <ChipChart />
            <RoundButton $cx={74.500} $gray>
              <svg width="20" height="34" viewBox="0 0 20 34" fill="none" stroke="#666" strokeWidth="2.800"><path d="M4 2L19 17L4 32" /></svg>
            </RoundButton>
            <RoundButton $cx={251.500}>
              <svg width="34" height="34" viewBox="0 0 34 34" fill="none" stroke={ORANGE} strokeWidth="3">
                <path d="M1.500 15V1.500H15M2 2L14 13M32.500 18V32.500H18M32 32L20 20.500" />
              </svg>
            </RoundButton>
          </KPanel>
          <ChipLegend>
            <Square $color="#5bb946" />套牢
            <Square $color="#e94848" $ml={43} />获利
          </ChipLegend>
          <StatRow>获利比例<Strong $track={0.3}>100.00%</Strong></StatRow>
          <StatRow>平均成本<Strong>11.57</Strong></StatRow>
          <Segment>
            <SegmentItem $active>90%筹码</SegmentItem>
            <SegmentItem>70%筹码</SegmentItem>
          </Segment>
          <StatRow>价格区间<Strong $track={-0.2}>10.23-12.98</Strong></StatRow>
          <StatRow>集中度<Strong>11.82%</Strong></StatRow>
          <StatRow>说明<Info>i</Info><Strong $track={0.5}>2025-12-19</Strong></StatRow>
        </RightColumn>
      </ChartArea>

      <AskBar>
        <AskBox>
          <svg width="98" height="46" viewBox="58 2060 98 46">
            <defs>
              <linearGradient id="ask" x1="0" y1="0" x2="1" y2="0"><stop offset="0.600" stopColor="#ff5500" /><stop offset="1" stopColor="#ff9448" /></linearGradient>
            </defs>
            <g transform="skewX(-8)" fill="url(#ask)">
              <text x="350" y="2101.500" fontSize="46" fontWeight="900" textLength="46" lengthAdjust="spacingAndGlyphs">问</text>
              <text x="399" y="2103" fontSize="56" fontWeight="900" textLength="49" lengthAdjust="spacingAndGlyphs">Ai</text>
            </g>
          </svg>
          <AskText>产能出清！多晶硅价格同比暴涨 34.4<AskDots>···</AskDots></AskText>
          <AskButton>
            <svg width="44" height="38" viewBox="0 0 44 38" fill="none" stroke="#fff" strokeWidth="4.600" strokeLinecap="round" strokeLinejoin="round"><path d="M3 19H40M25 4L40 19L25 34" /></svg>
          </AskButton>
        </AskBox>
      </AskBar>

      <BottomNav>
        <IndexBlock>
          <Triangle as="div" $w={22} $h={8} $color="#777" $ml={95} $up />
          <IndexValue>3899.44</IndexValue>
          <IndexLine><IndexName>上证</IndexName><IndexPct>0.60%</IndexPct></IndexLine>
        </IndexBlock>
        <NavItem>
          <svg width="66" height="62" viewBox="342 2147 66 62" fill="none" stroke="#666" strokeWidth="3">
            <path d="M360 2155Q375 2146 390 2155Q402 2163 403 2178Q403 2184 401 2190M407 2187L400 2192L400 2183M394 2199Q380 2210 365 2203Q349 2196 350 2178Q350 2170 353 2164M343 2168L353 2163V2172" />
            <path d="M366 2165L375 2175.500L384 2165M365 2176H386M365 2184.500H386M375.500 2175V2192.500" />
          </svg>
          <NavText>交易</NavText>
        </NavItem>
        <NavItem>
          <svg width="66" height="62" viewBox="545 2147 66 62" fill="none" stroke="#666" strokeWidth="3.200">
            <path d="M590 2152.500H556Q551.500 2152.500 551.500 2157V2199Q551.500 2203.500 556 2203.500H599Q603.500 2203.500 603.500 2199V2167" />
            <path d="M568 2187Q570 2177 576 2171L594 2156L598 2160L580 2178Q575 2184 568 2187ZM597 2153L600 2151.500Q605 2152 603.500 2156L601 2158Z" fill="#666" stroke="none" />
          </svg>
          <NavText>发帖</NavText>
        </NavItem>
        <NavItem>
          <svg width="66" height="62" viewBox="745 2147 66 62" fill="none" stroke="#666" strokeWidth="3.200">
            <rect x="753.500" y="2153.500" width="22" height="22" rx="4" />
            <rect x="753.500" y="2181" width="22" height="22" rx="4" />
            <rect x="780.500" y="2181" width="22" height="22" rx="4" />
            <path d="M791.500 2152.500L803 2164.500L791.500 2176.500L780 2164.500Z" strokeLinejoin="round" />
          </svg>
          <NavText>功能</NavText>
        </NavItem>
        <NavItem $color={ORANGE}>
          <svg width="66" height="62" viewBox="946 2147 66 62" fill="none" stroke={ORANGE} strokeWidth="2.800">
            <circle cx="979" cy="2178" r="26.500" />
            <path d="M965.500 2178H993M979 2165V2192" />
          </svg>
          <NavText>加自选</NavText>
        </NavItem>
      </BottomNav>

      <SystemBar>
        <svg width="60" height="50" viewBox="270 2310 60 50" stroke="#888" strokeWidth="6" strokeLinecap="round">
          <path d="M280.500 2322H319.500M280.500 2337H319.500M280.500 2352H319.500" />
        </svg>
        <svg width="70" height="50" viewBox="506 2310 70 50" fill="none" stroke="#888" strokeWidth="5.500" strokeLinecap="round" strokeLinejoin="round">
          <path d="M514 2334L540 2315L566 2334M522.500 2340V2348Q522.500 2352.500 527 2352.500H553Q557.500 2352.500 557.500 2348V2340" />
        </svg>
        <svg width="50" height="50" viewBox="754 2310 50 50" fill="none" stroke="#888" strokeWidth="5.500" strokeLinecap="round">
          <path d="M768 2352H799Q801.500 2352 801.500 2349V2325Q801.500 2322 799 2322H760" />
          <path d="M757 2321L770 2313V2324H760Q756 2324 757 2321Z" fill="#888" stroke="none" />
        </svg>
      </SystemBar>
    </Screen>
  );
}
